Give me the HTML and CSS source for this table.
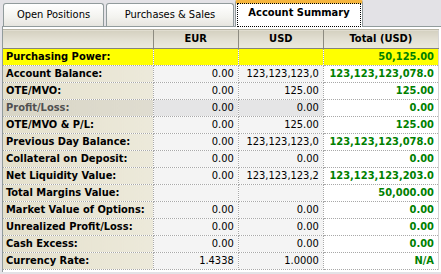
FILE: index.html
```html
<!DOCTYPE html>
<html lang="en">
<head>
    <meta charset="UTF-8">
    <title>Account Summary</title>
    <link rel="stylesheet" href="styles.css">
</head>
<body>

    <div class="tabs">
        <div class="tab tab-first">Open Positions</div>
        <div class="tab tab-second">Purchases &amp; Sales</div>
        <div class="tab tab-active"><span class="focus">Account Summary</span></div>
    </div>

    <div class="panel">
        <table class="summary">
            <colgroup>
                <col class="col-label">
                <col class="col-cur">
                <col class="col-cur">
                <col class="col-total">
            </colgroup>
            <thead>
                <tr>
                    <th></th>
                    <th>EUR</th>
                    <th>USD</th>
                    <th>Total (USD)</th>
                </tr>
            </thead>
            <tbody>
                <tr class="highlight">
                    <td class="label">Purchasing Power:</td>
                    <td class="num"></td>
                    <td class="num"></td>
                    <td class="total">50,125.00</td>
                </tr>
                <tr>
                    <td class="label">Account Balance:</td>
                    <td class="num">0.00</td>
                    <td class="num">123,123,123,0</td>
                    <td class="total">123,123,123,078.0</td>
                </tr>
                <tr>
                    <td class="label">OTE/MVO:</td>
                    <td class="num">0.00</td>
                    <td class="num">125.00</td>
                    <td class="total">125.00</td>
                </tr>
                <tr class="muted">
                    <td class="label">Profit/Loss:</td>
                    <td class="num">0.00</td>
                    <td class="num">0.00</td>
                    <td class="total">0.00</td>
                </tr>
                <tr>
                    <td class="label">OTE/MVO &amp; P/L:</td>
                    <td class="num">0.00</td>
                    <td class="num">125.00</td>
                    <td class="total">125.00</td>
                </tr>
                <tr>
                    <td class="label">Previous Day Balance:</td>
                    <td class="num">0.00</td>
                    <td class="num">123,123,123,0</td>
                    <td class="total">123,123,123,078.0</td>
                </tr>
                <tr>
                    <td class="label">Collateral on Deposit:</td>
                    <td class="num">0.00</td>
                    <td class="num">0.00</td>
                    <td class="total">0.00</td>
                </tr>
                <tr>
                    <td class="label">Net Liquidity Value:</td>
                    <td class="num">0.00</td>
                    <td class="num">123,123,123,2</td>
                    <td class="total">123,123,123,203.0</td>
                </tr>
                <tr>
                    <td class="label">Total Margins Value:</td>
                    <td class="num"></td>
                    <td class="num"></td>
                    <td class="total">50,000.00</td>
                </tr>
                <tr>
                    <td class="label">Market Value of Options:</td>
                    <td class="num">0.00</td>
                    <td class="num">0.00</td>
                    <td class="total">0.00</td>
                </tr>
                <tr>
                    <td class="label">Unrealized Profit/Loss:</td>
                    <td class="num">0.00</td>
                    <td class="num">0.00</td>
                    <td class="total">0.00</td>
                </tr>
                <tr>
                    <td class="label">Cash Excess:</td>
                    <td class="num">0.00</td>
                    <td class="num">0.00</td>
                    <td class="total">0.00</td>
                </tr>
                <tr>
                    <td class="label">Currency Rate:</td>
                    <td class="num">1.4338</td>
                    <td class="num">1.0000</td>
                    <td class="total">N/A</td>
                </tr>
            </tbody>
        </table>
    </div>

</body>
</html>
```

FILE: styles.css
```css
body { margin: 0; padding: 0; background: #e3e2e6; font-family: "DejaVu Sans Condensed", "DejaVu Sans", sans-serif; font-size: 11px; color: #000; width: 441px; height: 274px; overflow: hidden; }

.tabs { display: flex; align-items: flex-end; height: 26px; padding-left: 3px; }
.tab { box-sizing: border-box; height: 23px; padding-top: 2px; line-height: 18px; text-align: center; border: 1px solid #919b9c; border-bottom: none; border-radius: 3px 3px 0 0; background: linear-gradient(#ffffff, #f3f3ef 60%, #e6e5df); white-space: nowrap; }
.tab-first { width: 101px; margin-right: 2px; }
.tab-second { width: 128px; margin-right: 1px; }
.tab-active { width: 128px; height: 27px; margin-bottom: -1px; padding-top: 0; border-top: 3px solid #f5b43c; border-radius: 2px 2px 0 0; background: #fff; position: relative; z-index: 1; font-weight: bold; box-shadow: inset 0 1px 0 #ffd77a; }
.focus { display: block; box-sizing: border-box; height: 24px; margin: 0 1px; border: 1px dotted #000; line-height: 18px; }

.panel { box-sizing: border-box; width: 439px; height: 246px; margin-left: 2px; padding-top: 2px; border-top: 1px solid #919b9c; border-left: 1px solid #919b9c; background: #fff; }

.summary { width: 436px; border-collapse: collapse; table-layout: fixed; border-right: 1px solid #d4d4d4; }
.col-label { width: 150px; }
.col-cur { width: 85px; }
.col-total { width: 115px; }

.summary th { height: 18px; padding: 0; line-height: 18px; text-align: center; font-weight: bold; background: linear-gradient(#d4d0c0, #e2dfd2 50%, #ebe9df); border-top: 1px solid #b8b5a6; border-bottom: 1px solid #868478; border-left: 1px solid #8d8b80; }
.summary th:first-child { border-left: none; }

.summary td { height: 16px; padding: 0 4px 0 3px; line-height: 16px; border: 1px dotted #a8a8a8; border-top: none; white-space: nowrap; overflow: hidden; }
.summary td:first-child { border-left: none; }

.label { font-weight: bold; background: linear-gradient(90deg, #e4e0cc, #ece9da); }
.num { text-align: right; background: #f4f4f4; }
.total { text-align: right; font-weight: bold; color: #008000; background: #fff; }

.highlight td { background: #ffff00; }
.muted .label { color: #505050; background: linear-gradient(90deg, #d8d5c5, #dfdcd0); }
.muted .num { background: #e5e5e6; }
```
